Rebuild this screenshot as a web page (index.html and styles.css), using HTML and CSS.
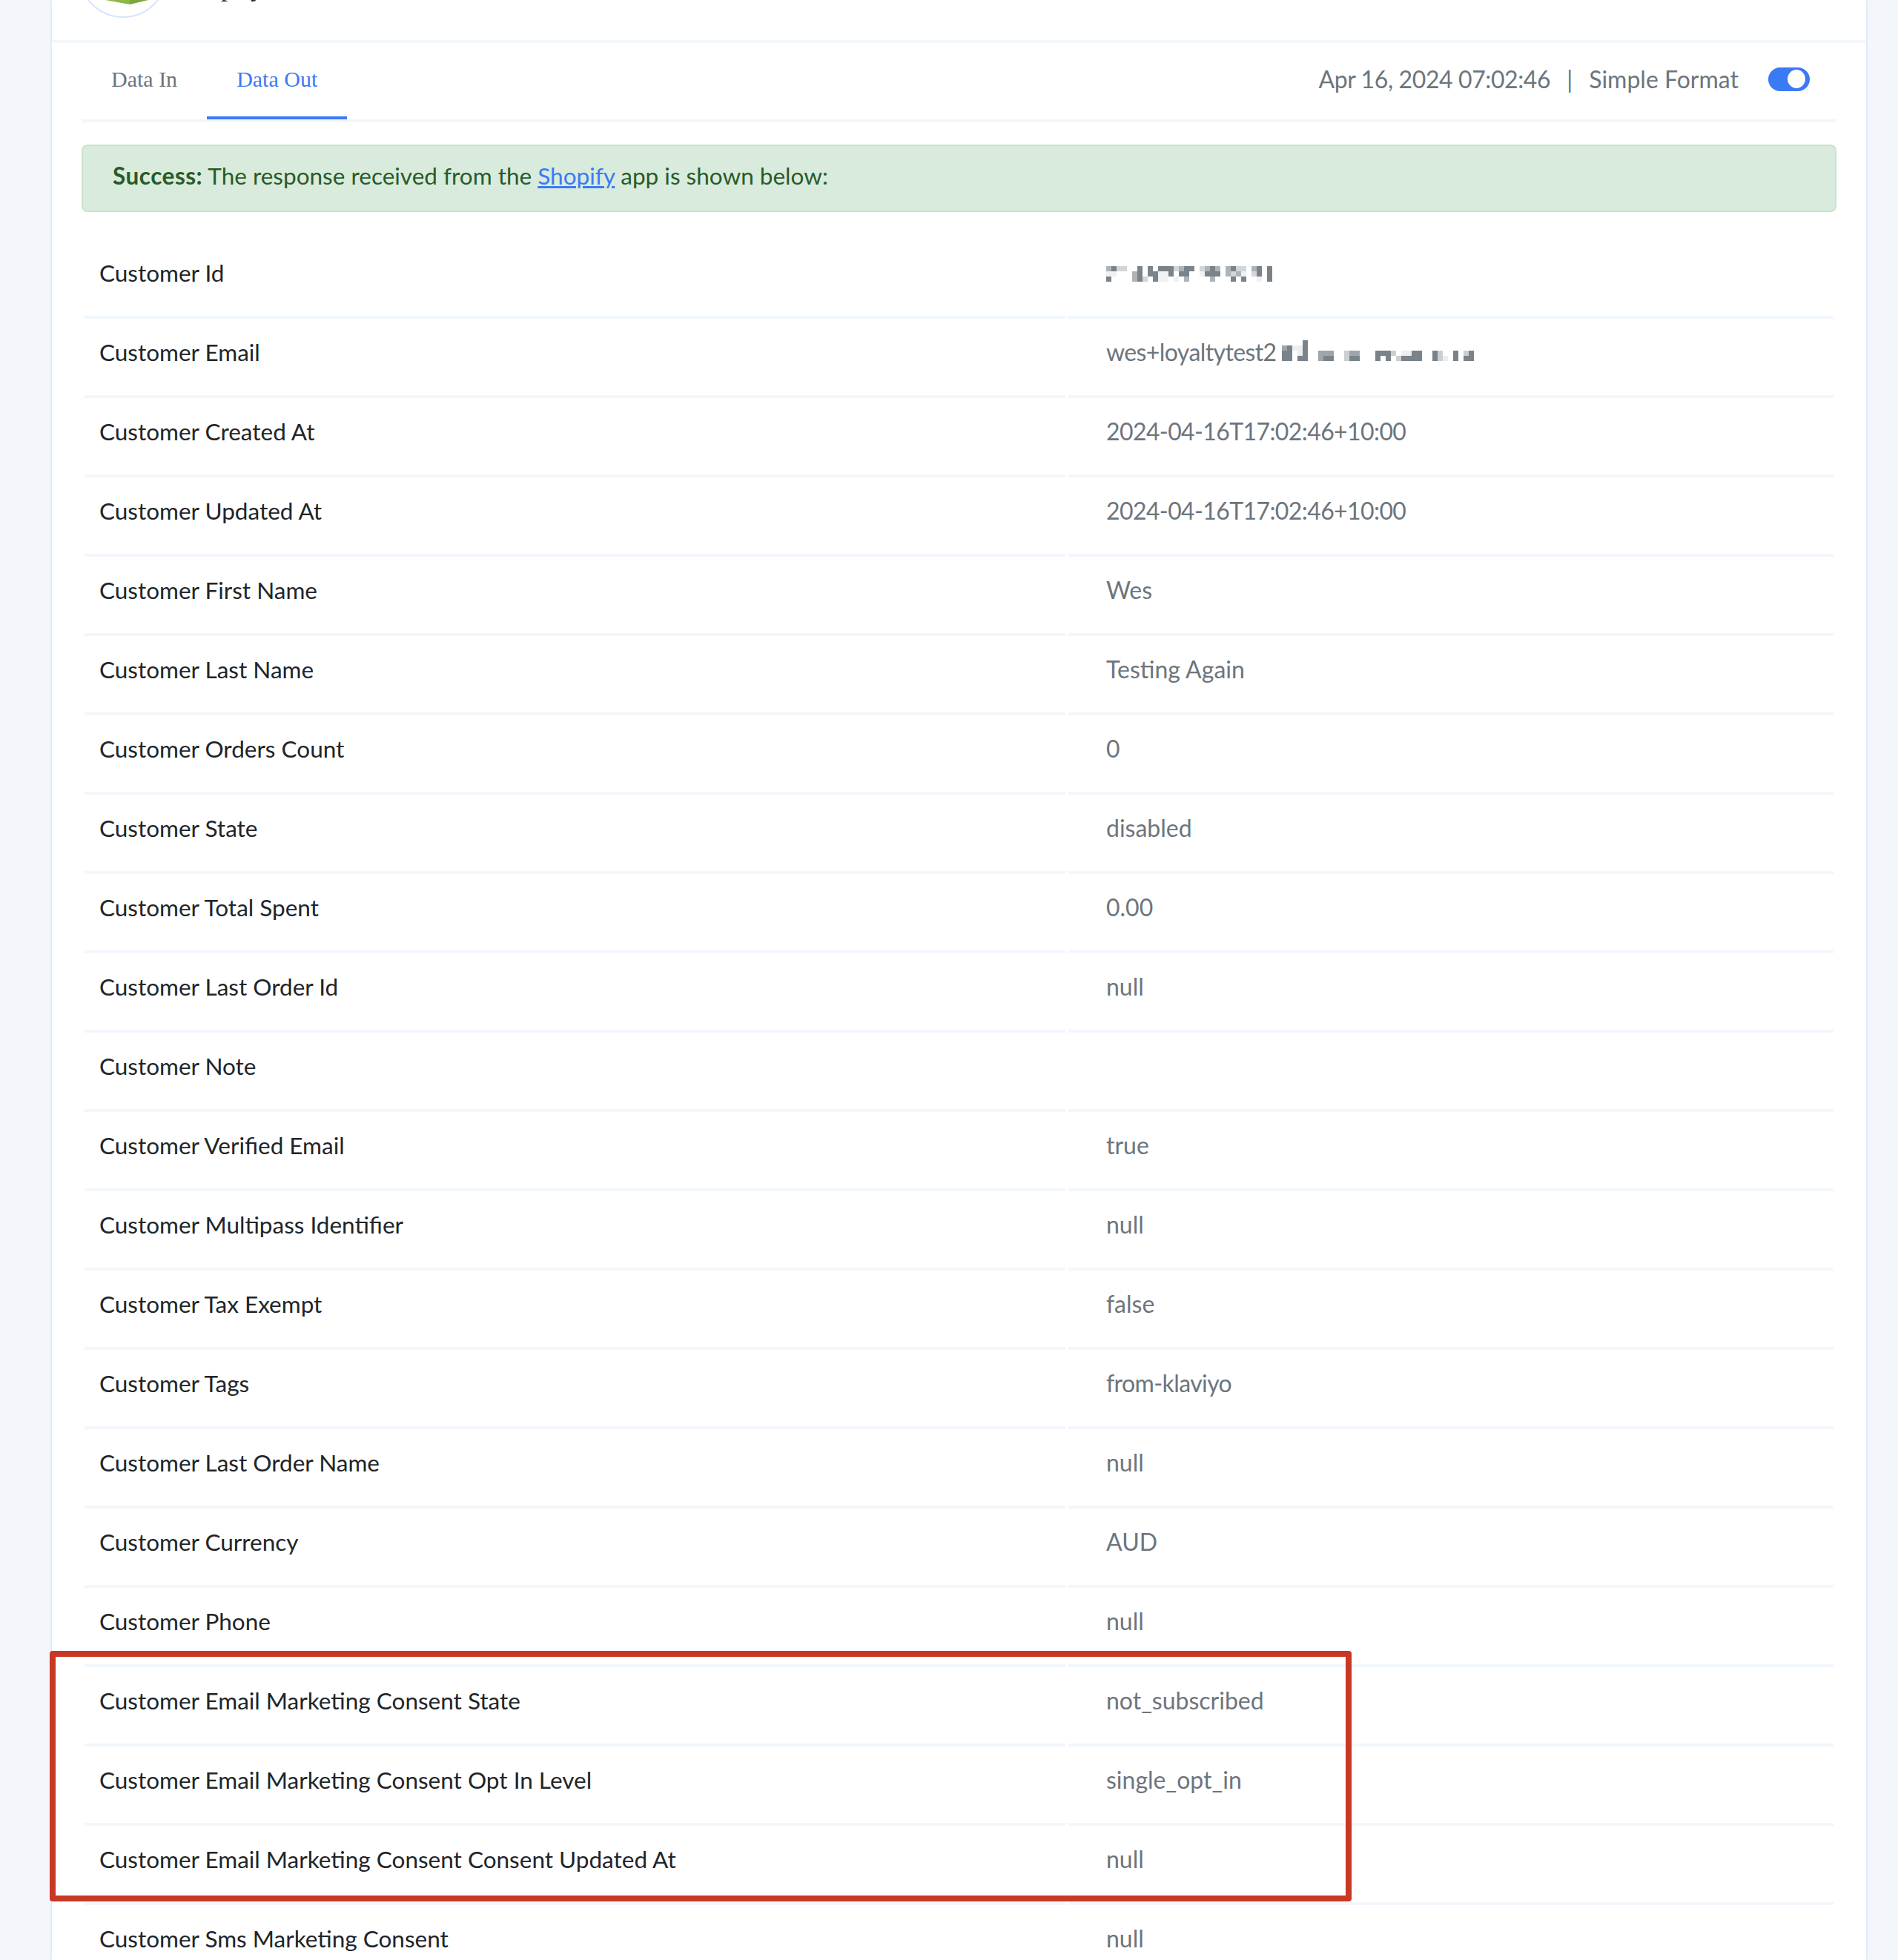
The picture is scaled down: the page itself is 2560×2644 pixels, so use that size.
FILE: index.html
```html
<!DOCTYPE html>
<html lang="en">
<head>
  <meta charset="UTF-8">
  <title>Task History - Data Out</title>
  <link rel="stylesheet" href="styles.css">
</head>
<body>
  <div class="card">
    <div class="app-head">
      <div class="logo">
        <svg class="cube" width="120" height="120" viewBox="0 0 120 120">
          <path d="M36 96 L69 102 L69 90 L36 90 Z" fill="#8cb848"/>
          <path d="M69 102 L94 96 L94 90 L69 90 Z" fill="#7ba53d"/>
        </svg>
      </div>
      <div class="app-name">Shopify</div>
    </div>

    <div class="tabs">
      <a class="tab">Data In</a>
      <a class="tab active">Data Out</a>
      <div class="tab-right">
        <span class="date">Apr 16, 2024 07:02:46</span>
        <span class="sep">|</span>
        <span>Simple Format</span>
        <span class="toggle"><span class="knob"></span></span>
      </div>
    </div>

    <div class="alert"><b>Success:</b> The response received from the <a href="#">Shopify</a> app is shown below:</div>

    <table class="fields">
      <tr>
        <th>Customer Id</th>
        <td>
          <svg class="mosaic" width="224" height="21" viewBox="0 0 32 3" shape-rendering="crispEdges">
            <path fill-opacity=".9" d="M1 0h1v1h-1zM6 0h1v3h-1zM8 0h1v2h-1zM10 0h3v1h-3zM12 1h1v1h-1zM9 1h1v2h-1zM15 0h2v1h-2zM14 1h2v1h-2zM20 0h1v2h-1zM19 1h1v1h-1zM21 1h1v1h-1zM24 0h1v1h-1zM29 0h1v2h-1zM31 0h1v3h-1zM0 2h1v1h-1zM24 2h1v1h-1zM26 2h1v1h-1z"/>
            <path fill-opacity=".55" d="M0 0h1v1h-1zM14 0h1v1h-1zM19 0h1v1h-1zM21 0h1v1h-1zM23 0h1v1h-1zM28 0h1v1h-1zM5 1h1v2h-1zM23 1h1v1h-1zM25 1h1v1h-1zM15 2h1v1h-1zM20 2h1v1h-1z"/>
            <path fill-opacity=".3" d="M2 0h2v1h-2zM13 0h1v1h-1zM18 0h1v1h-1zM25 0h2v1h-2zM24 1h1v1h-1zM28 1h1v1h-1zM7 2h1v1h-1z"/>
            <path fill-opacity=".1" d="M0 1h2v1h-2zM10 1h2v1h-2zM18 1h1v1h-1zM26 1h1v1h-1zM10 2h2v1h-2zM13 2h1v1h-1zM29 2h1v1h-1z"/>
          </svg>
        </td>
      </tr>
      <tr>
        <th>Customer Email</th>
        <td class="tight">wes+loyaltytest2<svg class="mosaic" width="266" height="28" viewBox="0 0 38 4" shape-rendering="crispEdges">
            <path fill-opacity=".9" d="M5 0h1v4h-1zM2 1h1v3h-1zM1 2h1v2h-1zM4 3h1v1h-1zM9 3h2v1h-2zM14 3h2v1h-2zM19 2h3v1h-3zM19 3h1v1h-1zM21 3h1v1h-1zM24 3h4v1h-4zM26 2h2v1h-2zM30 2h1v2h-1zM34 2h1v2h-1zM37 2h1v1h-1zM36 3h2v1h-2z"/>
            <path fill-opacity=".65" d="M1 1h1v1h-1zM8 2h3v1h-3zM8 3h1v1h-1zM14 2h2v1h-2z"/>
            <path fill-opacity=".35" d="M13 2h1v2h-1zM22 2h1v1h-1zM23 3h1v1h-1zM31 2h1v2h-1zM36 2h1v1h-1z"/>
            <path fill-opacity=".12" d="M3 1h2v1h-2zM4 2h1v1h-1zM24 2h2v1h-2zM32 3h1v1h-1z"/>
          </svg></td>
      </tr>
      <tr><th>Customer Created At</th><td class="tight">2024-04-16T17:02:46+10:00</td></tr>
      <tr><th>Customer Updated At</th><td class="tight">2024-04-16T17:02:46+10:00</td></tr>
      <tr><th>Customer First Name</th><td>Wes</td></tr>
      <tr><th>Customer Last Name</th><td>Testing Again</td></tr>
      <tr><th>Customer Orders Count</th><td>0</td></tr>
      <tr><th>Customer State</th><td>disabled</td></tr>
      <tr><th>Customer Total Spent</th><td>0.00</td></tr>
      <tr><th>Customer Last Order Id</th><td>null</td></tr>
      <tr><th>Customer Note</th><td></td></tr>
      <tr><th>Customer Verified Email</th><td>true</td></tr>
      <tr><th>Customer Multipass Identifier</th><td>null</td></tr>
      <tr><th>Customer Tax Exempt</th><td>false</td></tr>
      <tr><th>Customer Tags</th><td class="tight">from-klaviyo</td></tr>
      <tr><th>Customer Last Order Name</th><td>null</td></tr>
      <tr><th>Customer Currency</th><td>AUD</td></tr>
      <tr><th>Customer Phone</th><td>null</td></tr>
      <tr><th>Customer Email Marketing Consent State</th><td>not_subscribed</td></tr>
      <tr><th>Customer Email Marketing Consent Opt In Level</th><td>single_opt_in</td></tr>
      <tr><th>Customer Email Marketing Consent Consent Updated At</th><td>null</td></tr>
      <tr><th>Customer Sms Marketing Consent</th><td>null</td></tr>
    </table>
  </div>

  <div class="callout"></div>
</body>
</html>
```

FILE: styles.css
```css
html, body {
  margin: 0;
  height: 2644px;
  overflow: hidden;
}
body {
  font-family: Lato, sans-serif;
  font-size: 32px;
  color: #212529;
  background-color: #f3f7fb;
  padding: 0 43px 0 70px;
  box-sizing: border-box;
}
.card {
  background-color: #fff;
  box-shadow: 0 0 4px #c5d6f6;
  height: 2644px;
  overflow: hidden;
}
.app-head {
  display: flex;
  height: 54px;
  padding-left: 36px;
  border-bottom: 4px solid #f2f7fc;
  overflow: hidden;
}
.logo {
  width: 116px;
  height: 116px;
  margin-top: -96px;
  border: 2px solid #d8e4fb;
  border-radius: 50%;
  flex: none;
}
.cube {
  display: block;
  margin: -2px;
}
.app-name {
  font-family: "Liberation Serif", serif;
  font-size: 36px;
  line-height: 40px;
  margin: -38px 0 0 16px;
}
.tabs {
  display: flex;
  align-items: center;
  height: 103px;
  margin: 0 40px;
  border-bottom: 4px solid #f2f7fc;
}
.tab {
  font-family: "Liberation Serif", serif;
  font-size: 30px;
  color: #6c757d;
  line-height: 97px;
  padding: 0 40px;
  height: 103px;
  box-sizing: border-box;
}
.tab.active {
  color: #3b7af5;
  border-bottom: 4px solid #3b7af5;
}
.tab-right {
  margin-left: auto;
  display: flex;
  align-items: center;
  color: #6c757d;
  padding: 0 36px 6px 0;
}
.date {
  letter-spacing: -.4px;
}
.sep {
  margin: 0 22px;
}
.toggle {
  width: 56px;
  height: 32px;
  margin-left: 40px;
  background-color: #3b7af5;
  border-radius: 16px;
  display: flex;
  align-items: center;
  justify-content: flex-end;
  padding-right: 6px;
  box-sizing: border-box;
}
.knob {
  width: 24px;
  height: 25px;
  background-color: #fff;
  border-radius: 50%;
}
.alert {
  margin: 30px 40px 0;
  height: 91px;
  box-sizing: border-box;
  padding: 0 40px;
  font-size: 31.5px;
  line-height: 81px;
  background-color: #d9ebdc;
  border: 2px solid #c9e3ce;
  border-radius: 8px;
  color: #285b2a;
}
.alert b {
  letter-spacing: .5px;
}
.alert a {
  color: #3b7af5;
}
.fields {
  width: 2367px;
  margin: 37px 40px 0;
  border-collapse: separate;
  border-spacing: 4px 0;
  table-layout: fixed;
}
.fields th, .fields td {
  height: 89px;
  padding: 0 0 14px;
  border-bottom: 4px solid #f2f7fc;
  font-weight: 400;
  text-align: left;
}
.fields th {
  width: 1303px;
  padding-left: 20px;
  font-size: 31.5px;
}
.fields td {
  padding-left: 51px;
  color: #6c757d;
}
.fields td.tight {
  letter-spacing: -.6px;
}
.mosaic {
  fill: #6c757d;
}
.callout {
  position: absolute;
  left: 67px;
  top: 2227px;
  width: 1756px;
  height: 338px;
  box-sizing: border-box;
  border: 8px solid #c93725;
  border-radius: 4px;
}
```
